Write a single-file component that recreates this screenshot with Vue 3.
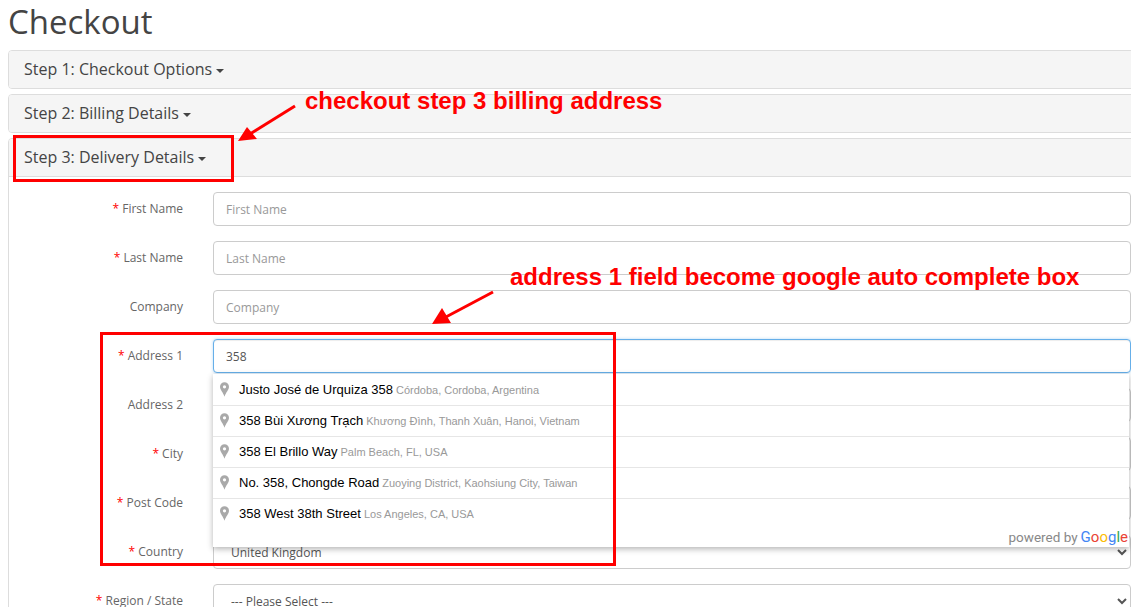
<script setup>
const steps = ['Step 1: Checkout Options', 'Step 2: Billing Details']
const fields = [
  { label: 'First Name', req: true, ph: 'First Name' },
  { label: 'Last Name', req: true, ph: 'Last Name' },
  { label: 'Company', req: false, ph: 'Company' },
  { label: 'Address 1', req: true, value: '358', focus: true },
  { label: 'Address 2', req: false, ph: 'Address 2' },
  { label: 'City', req: true, ph: 'City' },
  { label: 'Post Code', req: true, ph: 'Post Code' },
  { label: 'Country', req: true, select: 'United Kingdom' },
  { label: 'Region / State', req: true, select: '--- Please Select ---' },
]
const places = [
  ['Justo José de Urquiza 358', 'Córdoba, Cordoba, Argentina'],
  ['358 Bùi Xương Trạch', 'Khương Đình, Thanh Xuân, Hanoi, Vietnam'],
  ['358 El Brillo Way', 'Palm Beach, FL, USA'],
  ['No. 358, Chongde Road', 'Zuoying District, Kaohsiung City, Taiwan'],
  ['358 West 38th Street', 'Los Angeles, CA, USA'],
]
const googleLetters = [
  ['G', '#4285f4'], ['o', '#ea4335'], ['o', '#fbbc05'], ['g', '#4285f4'], ['l', '#34a853'], ['e', '#ea4335'],
]
</script>

<template>
  <div class="page">
    <h1 class="title">Checkout</h1>

    <div v-for="s in steps" :key="s" class="panel">
      <div class="heading">{{ s }} <i class="caret"></i></div>
    </div>

    <div class="panel">
      <div class="heading heading-open">Step 3: Delivery Details <i class="caret"></i></div>
      <div class="body">
        <div v-for="f in fields" :key="f.label" class="row">
          <label class="label"><span v-if="f.req" class="star">* </span>{{ f.label }}</label>
          <div class="control">
            <select v-if="f.select" class="input select">
              <option>{{ f.select }}</option>
            </select>
            <input v-else class="input" :class="{ focus: f.focus }" :placeholder="f.ph" :value="f.value" />
            <div v-if="f.focus" class="pac">
              <div v-for="p in places" :key="p[0]" class="pac-item">
                <svg class="pin" width="9" height="15" viewBox="0 0 10 16">
                  <path fill-rule="evenodd" fill="#a9a9a9" d="M5 0a5 5 0 0 1 5 5c0 3.4-3.4 6-5 11C3.4 11 0 8.400 0 5a5 5 0 0 1 5-5zm0 3.200a1.800 1.800 0 1 0 0 3.600 1.800 1.800 0 0 0 0-3.600z" />
                </svg>
                <span class="pac-main">{{ p[0] }}</span>
                <span class="pac-sub">{{ p[1] }}</span>
              </div>
              <div class="pac-foot">
                <span class="powered">powered by</span>
                <span class="google"><span v-for="(l, i) in googleLetters" :key="i" :style="{ color: l[1] }">{{ l[0] }}</span></span>
              </div>
            </div>
          </div>
        </div>
      </div>
    </div>

    <div class="mark mark-step"></div>
    <div class="mark mark-address"></div>
    <div class="note note-step">checkout step 3 billing address</div>
    <div class="note note-address">address 1 field become google auto complete box</div>
    <svg class="arrows" width="1131" height="607" viewBox="0 0 1131 607">
      <path d="M295 106 250 134" stroke="#f00" stroke-width="3" fill="none" />
      <path d="M238 141 247 127 257 139z" fill="#f00" />
      <path d="M493 292 444 318" stroke="#f00" stroke-width="3" fill="none" />
      <path d="M432 324 442 308 451 323z" fill="#f00" />
    </svg>
  </div>
</template>

<style>
html, body { margin: 0; padding: 0; background: #fff; overflow: hidden; }
</style>

<style scoped>
.page {
  position: relative;
  width: 1131px;
  height: 607px;
  overflow: hidden;
  box-sizing: border-box;
  padding-left: 8px;
  font-family: "Open Sans", sans-serif;
  color: #444;
}
.title {
  margin: 0;
  height: 45px;
  font-size: 33px;
  line-height: 44px;
  font-weight: 400;
  color: #444;
}
.panel {
  margin: 5px -10px 0 0;
  border: 1px solid #ddd;
  border-radius: 4px;
  background: #fff;
}
.heading {
  height: 37px;
  padding-left: 15px;
  background: #f5f5f5;
  border-radius: 3px;
  font-size: 16px;
  line-height: 37px;
  color: #444;
}
.heading-open {
  height: 37px;
  border-bottom: 1px solid #ddd;
  border-radius: 3px 3px 0 0;
}
.caret {
  display: inline-block;
  width: 0;
  height: 0;
  margin-left: 0;
  vertical-align: middle;
  border-top: 4px solid #444;
  border-left: 4px solid transparent;
  border-right: 4px solid transparent;
}
.body {
  padding: 15px 9px 0 0;
}
.row {
  display: grid;
  grid-template-columns: 174px 1fr;
  column-gap: 30px;
  margin-bottom: 15px;
}
.label {
  align-self: center;
  padding-bottom: 1px;
  text-align: right;
  font-size: 12px;
  color: #666;
}
.star {
  color: #f00;
}
.control {
  position: relative;
}
.input {
  display: block;
  box-sizing: border-box;
  width: 100%;
  height: 34px;
  padding: 0 12px;
  border: 1px solid #ccc;
  border-radius: 4px;
  background: #fff;
  font-family: "Open Sans", sans-serif;
  font-size: 12px;
  color: #555;
  outline: none;
}
.select {
  padding-left: 13px;
}
.input::placeholder {
  color: #999;
  opacity: 1;
}
.focus {
  border-color: #66afe9;
  box-shadow: inset 0 1px 1px rgba(0, 0, 0, 0.075), 0 0 3px rgba(102, 175, 233, 0.5);
}
.pac {
  position: absolute;
  top: 35px;
  left: 0;
  right: 2px;
  height: 173px;
  z-index: 5;
  background: #fff;
  box-shadow: 0 2px 6px rgba(0, 0, 0, 0.3);
  font-family: "Liberation Sans", Arial, sans-serif;
}
.pac-item {
  display: flex;
  align-items: baseline;
  box-sizing: border-box;
  height: 31px;
  padding-left: 26px;
  position: relative;
  border-top: 1px solid #e6e6e6;
  line-height: 29px;
  white-space: nowrap;
}
.pac-item:first-child {
  border-top-color: transparent;
}
.pin {
  position: absolute;
  left: 7px;
  top: 7px;
}
.pac-main {
  font-size: 13px;
  color: #000;
  margin-right: 3px;
}
.pac-sub {
  font-size: 11px;
  color: #999;
}
.pac-foot {
  position: absolute;
  right: 1px;
  bottom: 1px;
  display: flex;
  align-items: baseline;
  gap: 3px;
  font-family: Roboto, sans-serif;
}
.powered {
  font-size: 13.500px;
  color: #888;
}
.google {
  font-size: 15px;
  font-weight: 400;
}
.mark {
  position: absolute;
  box-sizing: border-box;
  border: 3px solid #f00;
  z-index: 10;
}
.mark-step {
  left: 13px;
  top: 135px;
  width: 221px;
  height: 47px;
}
.mark-address {
  left: 100px;
  top: 332px;
  width: 516px;
  height: 234px;
}
.note {
  position: absolute;
  z-index: 10;
  font-family: "Liberation Sans", Arial, sans-serif;
  font-weight: 700;
  font-size: 24px;
  line-height: 26px;
  color: #f00;
  white-space: nowrap;
}
.note-step {
  left: 305px;
  top: 88px;
}
.note-address {
  left: 510px;
  top: 264px;
}
.arrows {
  position: absolute;
  left: 0;
  top: 0;
  z-index: 10;
  pointer-events: none;
}
</style>
